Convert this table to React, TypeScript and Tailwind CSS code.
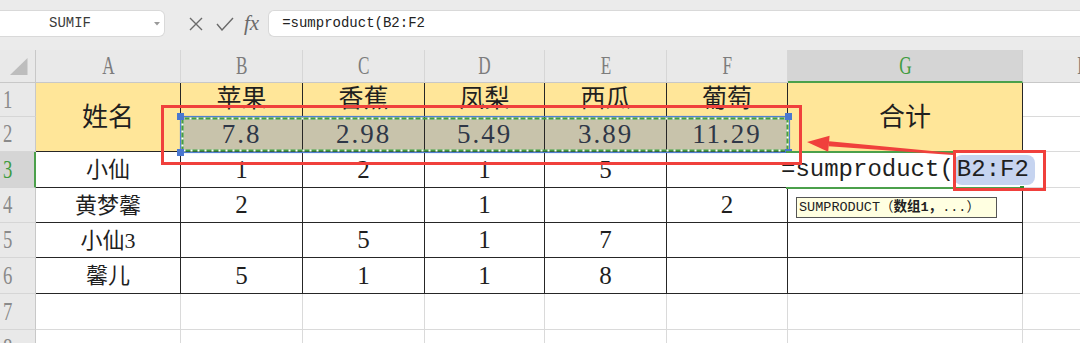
import React from "react";

const COLS = ["A", "B", "C", "D", "E", "F", "G", "H"];
const fruits = ["苹果", "香蕉", "凤梨", "西瓜", "葡萄"];
const prices = ["7.8", "2.98", "5.49", "3.89", "11.29"];
const data = [
  ["小仙", "1", "2", "1", "5", ""],
  ["黄梦馨", "2", "", "1", "", "2"],
  ["小仙3", "", "5", "1", "7", ""],
  ["馨儿", "5", "1", "1", "8", ""],
];

// borders: table cells are black, the rest of the sheet light grey
const tb = "border-r border-b border-[#262626]";
const gl = "border-r border-b border-[#dadada]";
const cellBase = "flex items-center justify-center whitespace-nowrap";

function ColHeader({ letter }: { letter: string }) {
  const active = letter === "G";
  return (
    <div
      className={
        active
          ? "flex items-center justify-center border-r border-b-2 border-r-[#d0d0d0] border-b-[#4ba04b] bg-[#d5d5d5] text-[#3f9c3f]"
          : "flex items-center justify-center border-r border-b border-r-[#d6d6d6] border-b-[#c8c8c8] bg-[#e9e9e9] text-[#7c7c7c]"
      }
    >
      <span className="inline-block scale-x-[0.66] text-[26px] leading-none">{letter}</span>
    </div>
  );
}

function RowHeader({ n }: { n: number }) {
  const active = n === 3;
  return (
    <div
      className={
        active
          ? "flex items-center border-r-2 border-b border-r-[#4ba04b] border-b-[#d4d4d4] bg-[#d5d5d5] pl-[3px] text-[#3f9c3f]"
          : "flex items-center border-r border-b border-r-[#c8c8c8] border-b-[#d6d6d6] bg-[#e9e9e9] pl-[3px] text-[#8a8a8a]"
      }
    >
      <span className="inline-block origin-left scale-x-[0.72] text-[26px] leading-none">{n}</span>
    </div>
  );
}

export default function App() {
  return (
    <div className="relative h-[343px] w-[1080px] overflow-hidden bg-white font-['Liberation_Serif','Noto_Sans_CJK_SC',serif] text-[#1f1f1f]">
      {/* name box + formula bar */}
      <div className="flex h-[50px] items-start bg-[#ebebeb] pt-[10px]">
        <div className="relative flex h-[27px] w-[165px] shrink-0 items-center rounded-r-md border border-l-0 border-[#d9d9d9] bg-white">
          <span className="ml-[49px] font-['Liberation_Mono',monospace] text-[14px] text-[#3a3a3a]">SUMIF</span>
          <svg className="absolute right-[4px] top-[11px]" width="6" height="4" viewBox="0 0 6 4">
            <path d="M0 0h6L3 3.5z" fill="#9a9a9a" />
          </svg>
        </div>
        <div className="flex h-[27px] items-center text-[#6a6a6a]">
          <svg className="ml-[24px]" width="14" height="14" viewBox="0 0 14 14">
            <path d="M1 1l12 12M13 1L1 13" stroke="#6a6a6a" strokeWidth="1.4" fill="none" />
          </svg>
          <svg className="ml-[13px]" width="18" height="14" viewBox="0 0 18 14">
            <path d="M1 7l5 6L17 1" stroke="#6a6a6a" strokeWidth="1.4" fill="none" />
          </svg>
          <span className="ml-[10px] font-['Liberation_Serif',serif] text-[21px] italic leading-none">fx</span>
        </div>
        <div className="ml-[9px] flex h-[27px] flex-1 items-center rounded-l-md border border-r-0 border-[#d9d9d9] bg-white pl-[13px] font-['Liberation_Mono',monospace] text-[14px] text-[#222]">
          =sumproduct(B2:F2
        </div>
      </div>

      {/* sheet grid */}
      <div className="grid grid-cols-[36px_145px_122px_122px_120px_122px_121px_235px_121px] grid-rows-[33px_34px_35px_36px_35px_35px_36px_36px_36px]">
        <div className="relative border-r border-b border-r-[#c8c8c8] border-b-[#c8c8c8] bg-[#e9e9e9]">
          <svg className="absolute left-0 top-0" width="36" height="33" viewBox="0 0 36 33">
            <path d="M10 25L27.5 8v17z" fill="#bdbdbd" />
          </svg>
        </div>
        {COLS.map((c) => (
          <ColHeader key={c} letter={c} />
        ))}

        {/* row 1 */}
        <RowHeader n={1} />
        <div className={`${cellBase} ${tb} row-span-2 bg-[#ffe699] text-[26px]`}>姓名</div>
        {fruits.map((f) => (
          <div key={f} className={`${cellBase} ${tb} bg-[#ffe699] pb-[2px] text-[25px]`}>
            {f}
          </div>
        ))}
        <div className={`${cellBase} ${tb} row-span-2 bg-[#ffe699] text-[26px]`}>合计</div>
        <div className={gl} />

        {/* row 2 */}
        <RowHeader n={2} />
        {prices.map((p) => (
          <div key={p} className={`${cellBase} ${tb} bg-[#c8c3ab] pt-[1px] text-[27px] tracking-[2px] text-[#2f3747]`}>
            {p}
          </div>
        ))}
        <div className={gl} />

        {/* rows 3 - 6 */}
        {data.map((row, i) => (
          <React.Fragment key={i}>
            <RowHeader n={i + 3} />
            {row.map((v, j) => (
              <div key={j} className={`${cellBase} ${tb} ${j === 0 ? "text-[22px]" : "text-[25px]"}`}>
                {v}
              </div>
            ))}
            <div className={tb} />
            <div className={gl} />
          </React.Fragment>
        ))}

        {/* rows 7 - 8 */}
        {[7, 8].map((n) => (
          <React.Fragment key={n}>
            <RowHeader n={n} />
            {COLS.map((c) => (
              <div key={c} className={gl} />
            ))}
          </React.Fragment>
        ))}
      </div>

      {/* copy / reference marquee around B2:F2 */}
      <svg className="absolute left-[176px] top-[112px]" width="618" height="44" viewBox="0 0 618 44">
        <rect x="4.5" y="4.5" width="609" height="36" fill="none" stroke="#4f7fd3" strokeWidth="1.2" />
        <rect x="6.5" y="6.5" width="605" height="32" fill="none" stroke="#43a043" strokeWidth="2" />
        <rect x="6.5" y="6.5" width="605" height="32" fill="none" stroke="#ffffff" strokeWidth="2" strokeDasharray="2 5" />
        <rect x="1" y="1" width="7" height="7" fill="#4a78d0" />
        <rect x="1" y="37" width="7" height="7" fill="#4a78d0" />
        <rect x="609" y="1" width="7" height="7" fill="#4a78d0" />
        <rect x="609" y="37" width="7" height="7" fill="#4a78d0" />
      </svg>

      {/* G3 in-cell editor */}
      <div className="absolute left-[786px] top-[151px] h-[2px] w-[238px] bg-[#4ba04b]" />
      <div className="absolute left-[781px] top-[153px] flex h-[34px] items-center bg-white pr-[6px] font-['Liberation_Mono',monospace] text-[24px] leading-none text-[#1f1f1f]">
        =sumproduct(
        <span className="rounded-lg bg-[#c6d4f0] py-[3px] pl-[3px] pr-[6px]">B2:F2</span>
      </div>
      <div className="absolute left-[786px] top-[187px] h-[2px] w-[238px] bg-[#4ba04b]" />
      <div className="absolute left-[1020px] top-[186px] h-[4px] w-[4px] bg-[#2f8a2f]" />

      {/* function hint */}
      <div className="absolute left-[796px] top-[197px] flex h-[21px] w-[201px] items-center border border-[#555] bg-[#ffffe1] pl-[2px] font-['Liberation_Mono','Noto_Sans_CJK_SC',monospace] text-[13.5px] leading-none text-[#222]">
        SUMPRODUCT（<b>数组1，</b>...）
      </div>

      {/* red annotations */}
      <div className="absolute left-[161px] top-[105px] h-[60px] w-[641px] border-[3px] border-[#f0403c]" />
      <div className="absolute left-[953px] top-[150px] h-[41px] w-[93px] border-[3px] border-[#f0403c]" />
      <svg className="absolute left-[800px] top-[130px]" width="160" height="35" viewBox="0 0 160 35">
        <path d="M7 12L29.6 5.8 28.2 21.8z" fill="#f0403c" />
        <path d="M29.1 11.3L153.1 23 152.9 25 28.7 16.3z" fill="#f0403c" />
      </svg>
    </div>
  );
}
